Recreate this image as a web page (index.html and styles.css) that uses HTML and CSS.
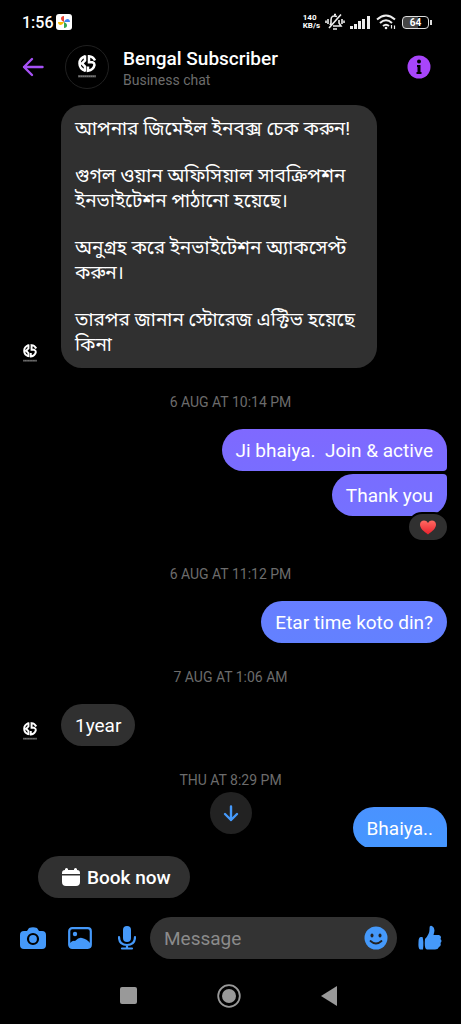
FILE: index.html
```html
<!DOCTYPE html>
<html lang="en">
<head>
<meta charset="utf-8">
<meta name="viewport" content="width=device-width, initial-scale=1">
<title>Bengal Subscriber</title>
<link rel="stylesheet" href="styles.css">
</head>
<body>
<svg class="sprite" aria-hidden="true">
  <symbol id="brand" viewBox="0 0 36 48">
    <g fill="none" stroke="#fff" stroke-width="5">
      <path d="M15 2.500Q3 6 3 17Q3 28 15 31.500"/>
      <path d="M14 1V11L8 17L14 23V33M3 17H9"/>
      <path d="M34 11Q30 3 22 2.500V14.500H29Q33 16 33 20Q31 30 20 31.500V23"/>
    </g>
    <path d="M0 40H36V45H0Z" fill="#444"/>
    <path d="M1 42.500H35" stroke="#888" stroke-width="2" stroke-dasharray="3 1"/>
  </symbol>
</svg>
<div class="phone">
  <div class="status">
    <div class="status-left">
      <span class="clock">1:56</span>
      <svg class="photos" viewBox="0 0 16 16" aria-hidden="true">
        <rect width="16" height="16" rx="3" fill="#fff"/>
        <path d="M8 8V2C4 2 4 6.500 8 8Z" fill="#e94335"/>
        <path d="M8 8H14C14 4 9.500 4 8 8Z" fill="#4285f4"/>
        <path d="M8 8V14C12 14 12 9.500 8 8Z" fill="#34a853"/>
        <path d="M8 8H2C2 12 6.500 12 8 8Z" fill="#fbbc04"/>
      </svg>
    </div>
    <div class="status-right">
      <span class="speed">140<br>KB/s</span>
      <svg width="20" height="18" viewBox="0 0 20 18" fill="none" stroke="#eee" stroke-width="1.600" aria-hidden="true">
        <path d="M8 13H16L14 10V7M12 3.500Q6 1.500 6 7V10L5 12M9 1.500H11M8 16H12M16 1.500L4 15M3 6V11M1 7.500V10M17 6V11M19 7.500V10"/>
      </svg>
      <svg width="21" height="14" viewBox="0 0 21 14" fill="#eee" aria-hidden="true">
        <rect x="0" y="11" width="3" height="3"/><rect x="4" y="9" width="3" height="5"/><rect x="8" y="6" width="3" height="8"/><rect x="12" y="4" width="3" height="10"/><rect x="17" y="1" width="3" height="13"/>
      </svg>
      <svg width="20" height="16" viewBox="0 0 20 16" fill="none" stroke="#eee" stroke-width="2" aria-hidden="true">
        <path d="M1 5.500Q10-2.500 19 5.500M4 9Q10 3.500 16 9M7 12Q10 9.500 13 12"/><circle cx="10" cy="14" r="1.300" fill="#eee" stroke="none"/>
        <path d="M15.500 11V14.500M18.500 15V11.500" stroke-width="1.200"/>
      </svg>
      <span class="battery">64</span>
    </div>
  </div>

  <header class="header">
    <button class="icon-button back" aria-label="Back">
      <svg width="22" height="20" viewBox="0 0 22 20" fill="none" stroke="#a551f5" stroke-width="2.400" stroke-linecap="round" stroke-linejoin="round"><path d="M10 2L2 10L10 18M2 10H20.500"/></svg>
    </button>
    <div class="avatar"><svg width="18" height="24"><use href="#brand"/></svg></div>
    <div class="who">
      <h1 class="name">Bengal Subscriber</h1>
      <p class="sub">Business chat</p>
    </div>
    <button class="icon-button" aria-label="Info">
      <svg width="24" height="24" viewBox="0 0 24 24"><circle cx="12" cy="12" r="11.500" fill="#a845fb"/><path d="M10 10H13.500V17H14.500V19H9.500V17H10.500V12H10Z" fill="#000"/><circle cx="12" cy="6.500" r="2" fill="#000"/></svg>
    </button>
  </header>

  <div class="chat-area">
    <main class="chat">
      <div class="row">
        <svg class="mini" width="14" height="19"><use href="#brand"/></svg>
        <div class="bubble received long" lang="bn">
          <p>আপনার জিমেইল ইনবক্স চেক করুন!</p>
          <p>গুগল ওয়ান অফিসিয়াল সাবক্রিপশন ইনভাইটেশন পাঠানো হয়েছে।</p>
          <p>অনুগ্রহ করে ইনভাইটেশন অ্যাকসেপ্ট করুন।</p>
          <p>তারপর জানান স্টোরেজ এক্টিভ হয়েছে কিনা</p>
        </div>
      </div>
      <time class="date">6 AUG AT 10:14 PM</time>
      <div class="sent-group">
        <div class="bubble sent violet first">Ji bhaiya.&nbsp; Join &amp; active</div>
        <div class="bubble sent indigo last">Thank you
          <span class="reaction"><svg width="16" height="15" viewBox="0 0 16 15" role="img" aria-label="Love"><defs><linearGradient id="heart" x2="0" y2="1"><stop stop-color="#ff6a62"/><stop offset="1" stop-color="#e8202c"/></linearGradient></defs><path d="M8 14.500C4 11.500 0 8.500 0 4.500C0 0 6-1 8 3C10-1 16 0 16 4.500C16 8.500 12 11.500 8 14.500Z" fill="url(#heart)"/></svg></span>
        </div>
      </div>
      <time class="date after-reaction">6 AUG AT 11:12 PM</time>
      <div class="sent-group">
        <div class="bubble sent blue">Etar time koto din?</div>
      </div>
      <time class="date">7 AUG AT 1:06 AM</time>
      <div class="row">
        <svg class="mini" width="14" height="19"><use href="#brand"/></svg>
        <div class="bubble received">1year</div>
      </div>
      <time class="date">THU AT 8:29 PM</time>
      <div class="sent-group">
        <div class="bubble sent sky first">Bhaiya..</div>
      </div>
    </main>
    <button class="jump" aria-label="Jump to latest">
      <svg width="16" height="17" viewBox="0 0 16 17" fill="none" stroke="#4599fa" stroke-width="2.400" stroke-linecap="round" stroke-linejoin="round"><path d="M8 1.500V15M2 9L8 15L14 9"/></svg>
    </button>
  </div>

  <div class="actions">
    <button class="book">
      <svg width="18" height="18" viewBox="0 0 18 18" fill="#fff" aria-hidden="true"><path d="M0 6V5Q0 2 3 2V1Q4.500-1 6 1V2H12V1Q13.500-1 15 1V2Q18 2 18 5V6ZM0 7.500H18V14Q18 18 14 18H4Q0 18 0 14Z"/></svg>
      Book now
    </button>
  </div>

  <form class="composer">
    <div class="tools">
      <button type="button" class="icon-button" aria-label="Camera">
        <svg width="26" height="22" viewBox="0 0 26 22"><path d="M9 1Q13-.500 17 1L19 4H22Q26 4 26 8V18Q26 22 22 22H4Q0 22 0 18V8Q0 4 4 4H7Z" fill="#4599fa"/><circle cx="13" cy="12" r="5" fill="none" stroke="#000" stroke-width="2.200"/></svg>
      </button>
      <button type="button" class="icon-button" aria-label="Gallery">
        <svg width="24" height="22" viewBox="0 0 24 22"><rect x="1.200" y="1.200" width="21.600" height="19.600" rx="3" fill="none" stroke="#4599fa" stroke-width="2.200"/><circle cx="7" cy="7" r="2.200" fill="#4599fa"/><path d="M2 16Q5 13 7 14Q11 10 14 11Q19 12 22 16V20H2Z" fill="#4599fa"/></svg>
      </button>
      <button type="button" class="icon-button" aria-label="Voice message">
        <svg width="18" height="24" viewBox="0 0 18 24"><rect x="5" y="0" width="8" height="16" rx="4" fill="#4599fa"/><path d="M1 11Q1 19 9 19Q17 19 17 11M9 19V22.500M4 22.500H14" fill="none" stroke="#4599fa" stroke-width="2.200" stroke-linecap="round"/></svg>
      </button>
    </div>
    <div class="field">
      <input class="message" type="text" placeholder="Message" aria-label="Message">
      <button type="button" class="icon-button" aria-label="Emoji">
        <svg width="24" height="24" viewBox="0 0 24 24"><circle cx="12" cy="12" r="11.500" fill="#4599fa"/><ellipse cx="8" cy="9.500" rx="1.500" ry="2" fill="#222"/><ellipse cx="16" cy="9.500" rx="1.500" ry="2" fill="#222"/><path d="M6.500 15Q12 20 17.500 15" fill="none" stroke="#222" stroke-width="1.800" stroke-linecap="round"/></svg>
      </button>
    </div>
    <button type="button" class="icon-button" aria-label="Send like">
      <svg width="24" height="26" viewBox="0 0 24 26" fill="#4599fa"><path d="M3 12H4.500Q6 16 5 24.500H2Q0 24 .500 17Q.500 12 3 12Z"/><path d="M7 14Q12 9 11.500 3Q11.500 0 14 1Q18 3 15.500 10H21Q24 11 22.500 14Q24.500 16 22.500 18Q23.500 21 21 22Q20 24.500 17 24.500H9Q6 24 7 14Z"/></svg>
    </button>
  </form>

  <nav class="system">
    <button class="icon-button" aria-label="Recent apps"><svg width="18" height="18"><rect x="0" y="0" width="17" height="17" rx="2" fill="#999"/></svg></button>
    <button class="icon-button" aria-label="Home"><svg width="24" height="24"><circle cx="12" cy="12" r="10.800" fill="none" stroke="#999" stroke-width="1.800"/><circle cx="12" cy="12" r="7" fill="#999"/></svg></button>
    <button class="icon-button" aria-label="System back"><svg width="16" height="20"><path d="M0 10L16 0V20Z" fill="#999"/></svg></button>
  </nav>
</div>
</body>
</html>
```
FILE: styles.css
```css
* { box-sizing: border-box; }
body {
  margin: 0;
  background: #000;
  color: #fff;
  font-family: Roboto, "Noto Sans", "Noto Sans Bengali", sans-serif;
}
p, h1 { margin: 0; }
button { font: inherit; color: inherit; border: 0; padding: 0; cursor: pointer; }
svg { display: block; flex: none; }
.sprite { position: absolute; width: 0; height: 0; }
.phone { height: 100vh; display: flex; flex-direction: column; }

.status {
  display: flex;
  justify-content: space-between;
  align-items: center;
  height: 44px;
  padding: 0 32px 0 22px;
}
.status-left { display: flex; align-items: center; gap: 2px; }
.status-right { display: flex; align-items: center; gap: 5px; }
.clock { font-size: 16px; font-weight: 500; }
.photos { width: 16px; height: 16px; }
.speed { font-size: 8px; line-height: 8px; font-weight: 700; }
.battery {
  position: relative;
  width: 27px;
  height: 13px;
  margin-left: 1px;
  border: 1px solid #ddd;
  border-radius: 4px;
  background: linear-gradient(90deg, #444 60%, #000 60%);
  font-size: 10px;
  line-height: 11px;
  font-weight: 700;
  text-align: center;
}
.battery::after {
  content: "";
  position: absolute;
  right: -4px;
  top: 3px;
  width: 2px;
  height: 5px;
  background: #ddd;
}

.icon-button {
  display: flex;
  align-items: center;
  justify-content: center;
  flex: none;
  width: 28px;
  height: 28px;
  background: none;
}

.header {
  display: flex;
  align-items: center;
  height: 48px;
  padding: 0 28px 2px 19px;
}
.avatar {
  display: flex;
  align-items: center;
  justify-content: center;
  width: 44px;
  height: 44px;
  margin: 0 14px 0 18px;
  border: 1px solid #202020;
  border-radius: 50%;
}
.who { flex: 1; min-width: 0; padding-top: 3px; }
.name { font-size: 19px; line-height: 24px; font-weight: 500; }
.sub { font-size: 14px; line-height: 19px; color: #6c6c6c; }

.chat-area { position: relative; flex: 1; min-height: 0; }
.chat {
  display: flex;
  flex-direction: column;
  height: 100%;
  padding: 13px 14px 0;
  overflow: hidden;
}
.row { display: flex; align-items: flex-end; flex: none; padding-left: 9px; gap: 24px; }
.mini { margin-bottom: 5px; }
.bubble {
  padding: 10px 14px 8px;
  border-radius: 21px;
  font-size: 19px;
  line-height: 24px;
}
.received { background: #303030; }
.long {
  display: flex;
  flex-direction: column;
  gap: 22px;
  width: 316px;
  padding: 11px 14px;
  line-height: 25px;
}
.sent-group { display: flex; flex-direction: column; align-items: flex-end; flex: none; gap: 3px; }
.sent { position: relative; }
.violet { background: linear-gradient(#7f69ff, #796dff); }
.indigo { background: linear-gradient(#796dff, #7571ff); }
.blue { background: linear-gradient(#677eff, #6381ff); }
.sky { background: linear-gradient(#4a92ff, #4597ff); }
.first { border-bottom-right-radius: 4px; }
.last { border-top-right-radius: 4px; }
.reaction {
  position: absolute;
  right: -2px;
  bottom: -26px;
  display: flex;
  align-items: center;
  justify-content: center;
  width: 42px;
  height: 30px;
  border: 2px solid #000;
  border-radius: 15px;
  background: #303030;
}
.date {
  flex: none;
  padding: 24px 0 17px;
  font-size: 14px;
  line-height: 20px;
  text-align: center;
  color: #6c6c6c;
}
.after-reaction { padding-top: 48px; }
.jump {
  position: absolute;
  left: 50%;
  bottom: 13px;
  transform: translateX(-50%);
  display: flex;
  align-items: center;
  justify-content: center;
  width: 42px;
  height: 42px;
  border-radius: 50%;
  background: #222;
}

.actions { padding: 9px 38px 19px; }
.book {
  display: flex;
  align-items: center;
  gap: 7px;
  height: 42px;
  padding: 0 19px 0 24px;
  border-radius: 21px;
  background: #303030;
  font-size: 19px;
  font-weight: 500;
}
.composer { display: flex; align-items: center; padding: 0 17px 0 19px; }
.tools { display: flex; gap: 19px; }
.field {
  display: flex;
  align-items: center;
  flex: 1;
  min-width: 0;
  height: 42px;
  margin: 0 19px 0 9px;
  padding: 0 7px 0 14px;
  border-radius: 21px;
  background: #333;
}
.message {
  flex: 1;
  min-width: 0;
  padding: 0;
  border: 0;
  outline: 0;
  background: none;
  color: #fff;
  font: inherit;
  font-size: 19px;
}
.message::placeholder { color: #8b8b8b; opacity: 1; }
.system { display: flex; justify-content: center; align-items: center; gap: 72px; height: 65px; padding: 9px 3px 0 0; }
```
